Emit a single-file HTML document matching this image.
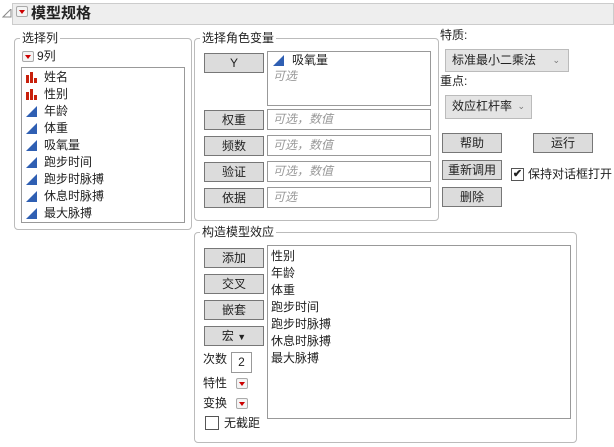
<!DOCTYPE html><html><head><meta charset="utf-8"><style>
*{box-sizing:border-box;margin:0;padding:0}
body{width:614px;height:447px;background:#fff;font-family:"Liberation Sans","Noto Sans CJK SC",sans-serif;font-size:12px;color:#222;position:relative;overflow:hidden}
.a{position:absolute}
.grp{position:absolute;border:1px solid #bbb;border-radius:4px}
.lbl{position:absolute;background:#fff;padding:0 2px;line-height:14px}
.btn{position:absolute;background:#dcdcdc;border:1px solid #777;text-align:center;line-height:18px;width:60px;height:20px}
.box{position:absolute;border:1px solid #999;background:#fff}
.ph{color:#999;font-style:italic;padding-left:5px;line-height:18px}
.rb{position:absolute;width:12px;height:11px;border:1px solid #aaa;border-radius:2px;background:#f4f4f4}
.rb:after{content:"";position:absolute;left:2px;top:3px;border-left:3.5px solid transparent;border-right:3.5px solid transparent;border-top:4px solid #c00}
.row{height:17px;line-height:17px;padding-left:22px;position:relative}
.ic{position:absolute;left:4px;top:3px}
.dd{position:absolute;background:#e4e4e4;border:1px solid #bbb;line-height:21px;padding-left:6px}
</style></head><body>
<div class="a" style="left:12px;top:3px;width:602px;height:22px;background:#eee;border:1px solid #ccc"></div>
<svg class="a" style="left:2px;top:9px" width="10" height="9"><path d="M9 0L9 8L1 8Z" fill="none" stroke="#888"/></svg>
<div class="rb" style="left:16px;top:6px;width:12px;height:11px"></div>
<div class="a" style="left:31px;top:4px;font-size:15px;font-weight:bold;line-height:20px">模型规格</div>

<div class="grp" style="left:14px;top:38px;width:178px;height:192px"></div>
<div class="lbl" style="left:20px;top:31px">选择列</div>
<div class="rb" style="left:22px;top:51px"></div>
<div class="a" style="left:37px;top:49px;line-height:14px">9列</div>
<div class="box" style="left:21px;top:67px;width:164px;height:156px;padding-top:1px">
<div class="row"><svg class="ic" width="12" height="11"><path d="M0 11V3h3v8zM4 11V0h3v11zM8 11V6h3v5z" fill="#c8200c"/></svg>姓名</div>
<div class="row"><svg class="ic" width="12" height="11"><path d="M0 11V3h3v8zM4 11V0h3v11zM8 11V6h3v5z" fill="#c8200c"/></svg>性别</div>
<div class="row"><svg class="ic" width="12" height="11"><path d="M0 11L11 0V11Z" fill="#2f5fb3"/></svg>年龄</div>
<div class="row"><svg class="ic" width="12" height="11"><path d="M0 11L11 0V11Z" fill="#2f5fb3"/></svg>体重</div>
<div class="row"><svg class="ic" width="12" height="11"><path d="M0 11L11 0V11Z" fill="#2f5fb3"/></svg>吸氧量</div>
<div class="row"><svg class="ic" width="12" height="11"><path d="M0 11L11 0V11Z" fill="#2f5fb3"/></svg>跑步时间</div>
<div class="row"><svg class="ic" width="12" height="11"><path d="M0 11L11 0V11Z" fill="#2f5fb3"/></svg>跑步时脉搏</div>
<div class="row"><svg class="ic" width="12" height="11"><path d="M0 11L11 0V11Z" fill="#2f5fb3"/></svg>休息时脉搏</div>
<div class="row"><svg class="ic" width="12" height="11"><path d="M0 11L11 0V11Z" fill="#2f5fb3"/></svg>最大脉搏</div>
</div>

<div class="grp" style="left:194px;top:38px;width:245px;height:183px"></div>
<div class="lbl" style="left:200px;top:31px">选择角色变量</div>
<div class="btn" style="left:204px;top:53px">Y</div>
<div class="box" style="left:267px;top:51px;width:164px;height:55px">
<div class="row" style="padding-left:24px"><svg class="ic" style="left:5px" width="12" height="11"><path d="M0 11L11 0V11Z" fill="#2f5fb3"/></svg>吸氧量</div>
<div class="ph" style="line-height:14px">可选</div></div>
<div class="btn" style="left:204px;top:110px">权重</div><div class="box ph" style="left:267px;top:109px;width:164px;height:21px">可选，数值</div>
<div class="btn" style="left:204px;top:136px">频数</div><div class="box ph" style="left:267px;top:135px;width:164px;height:21px">可选，数值</div>
<div class="btn" style="left:204px;top:162px">验证</div><div class="box ph" style="left:267px;top:161px;width:164px;height:21px">可选，数值</div>
<div class="btn" style="left:204px;top:188px">依据</div><div class="box ph" style="left:267px;top:187px;width:164px;height:21px">可选</div>

<div class="a" style="left:440px;top:28px;line-height:14px">特质:</div>
<div class="dd" style="left:445px;top:49px;width:124px;height:23px">标准最小二乘法<span style="position:absolute;right:8px;color:#777;font-size:9px">⌄</span></div>
<div class="a" style="left:440px;top:74px;line-height:14px">重点:</div>
<div class="dd" style="left:445px;top:95px;width:87px;height:24px">效应杠杆率<span style="position:absolute;right:6px;color:#777;font-size:9px">⌄</span></div>
<div class="btn" style="left:442px;top:133px">帮助</div>
<div class="btn" style="left:533px;top:133px">运行</div>
<div class="btn" style="left:442px;top:160px">重新调用</div>
<div class="a" style="left:511px;top:168px;width:13px;height:13px;border:1px solid #555;background:#fff;font-size:11px;line-height:11px;text-align:center;font-weight:bold">✔</div>
<div class="a" style="left:528px;top:166px;line-height:16px;white-space:nowrap">保持对话框打开</div>
<div class="btn" style="left:442px;top:187px">删除</div>

<div class="grp" style="left:194px;top:232px;width:383px;height:211px"></div>
<div class="lbl" style="left:200px;top:225px">构造模型效应</div>
<div class="btn" style="left:204px;top:248px">添加</div>
<div class="btn" style="left:204px;top:274px">交叉</div>
<div class="btn" style="left:204px;top:300px">嵌套</div>
<div class="btn" style="left:204px;top:326px">宏 <span style="font-size:9px">▼</span></div>
<div class="a" style="left:203px;top:351px;line-height:16px">次数</div>
<div class="box" style="left:231px;top:352px;width:21px;height:21px;text-align:center;line-height:19px">2</div>
<div class="a" style="left:203px;top:375px;line-height:16px">特性</div><div class="rb" style="left:236px;top:378px"></div>
<div class="a" style="left:203px;top:395px;line-height:16px">变换</div><div class="rb" style="left:236px;top:398px"></div>
<div class="a" style="left:205px;top:416px;width:14px;height:14px;border:1px solid #555;background:#fff"></div>
<div class="a" style="left:224px;top:415px;line-height:16px">无截距</div>
<div class="box" style="left:267px;top:245px;width:304px;height:174px;padding:2px 0 0 3px;line-height:17px">性别<br>年龄<br>体重<br>跑步时间<br>跑步时脉搏<br>休息时脉搏<br>最大脉搏</div>
</body></html>
